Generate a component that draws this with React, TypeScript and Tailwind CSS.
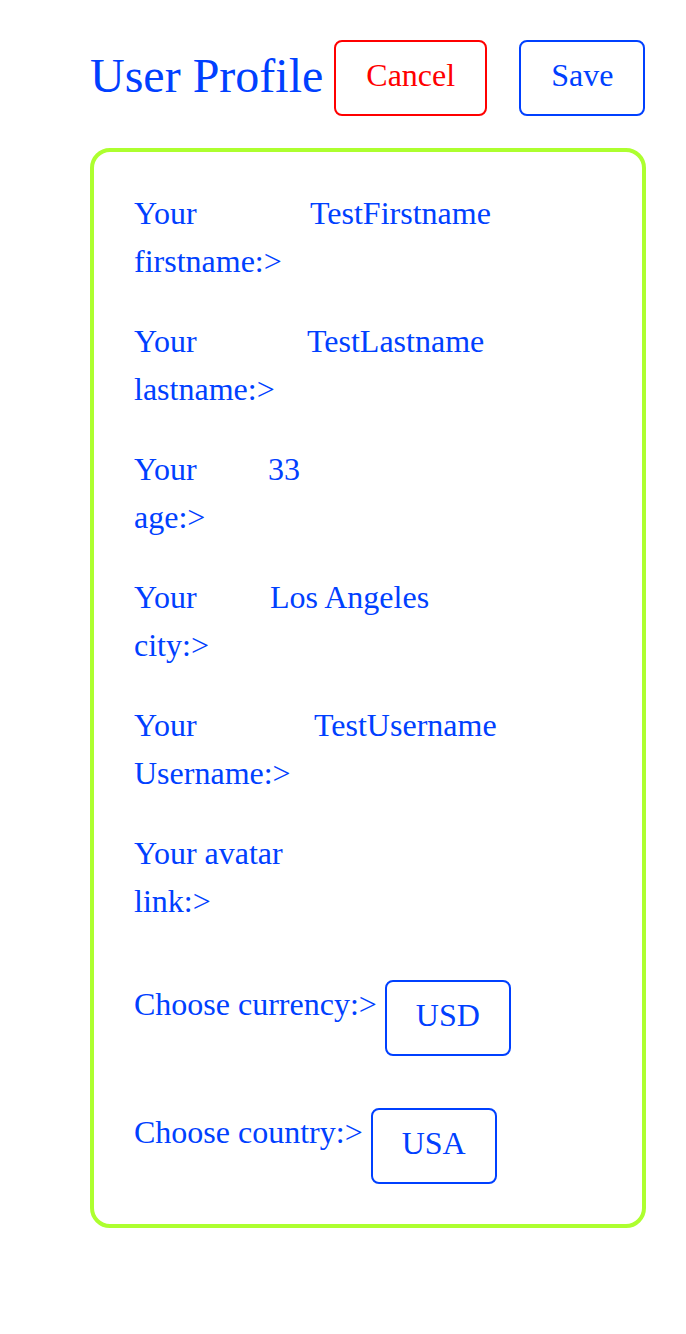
import React from "react";

const rows: { label: string; value: string; w: string }[] = [
  { label: "Your firstname:>", value: "TestFirstname", w: "w-[176px]" },
  { label: "Your lastname:>", value: "TestLastname", w: "w-[173px]" },
  { label: "Your age:>", value: "33", w: "w-[134px]" },
  { label: "Your city:>", value: "Los Angeles", w: "w-[136px]" },
  { label: "Your Username:>", value: "TestUsername", w: "w-[180px]" },
  { label: "Your avatar link:>", value: "", w: "w-[176px]" },
];

function Btn({ children, red, small }: { children: React.ReactNode; red?: boolean; small?: boolean }) {
  const pad = small ? "px-[29px]" : "px-[30px]";
  return (
    <button
      className={
        red
          ? `h-[76px] ${pad} pb-[6px] flex items-center justify-center border-2 border-[#ff0000] rounded-[8px] text-[32px] leading-normal text-[#ff0000] bg-white shrink-0`
          : `h-[76px] ${pad} pb-[6px] flex items-center justify-center border-2 border-[#0040ff] rounded-[8px] text-[32px] leading-normal text-[#0040ff] bg-white shrink-0`
      }
    >
      {children}
    </button>
  );
}

export default function App() {
  return (
    <div
      className="min-h-[1334px] w-[686px] bg-white pt-[40px] text-[#0040ff]"
      style={{ fontFamily: '"Liberation Serif", "Times New Roman", serif' }}
    >
      <div className="ml-[90px] w-[556px]">
        <div className="flex items-center">
          <h1 className="text-[48px] leading-normal font-normal mb-[4px] whitespace-nowrap">User Profile</h1>
          <div className="ml-[11px]">
            <Btn red>Cancel</Btn>
          </div>
          <div className="ml-[32px]">
            <Btn>Save</Btn>
          </div>
        </div>

        <div className="mt-[32px] border-[4px] border-[#adff2f] rounded-[20px] pt-[37px] pb-[40px] px-[40px] flex flex-col">
          {rows.map((r, i) => (
            <div key={i} className={i === rows.length - 1 ? "flex items-start mb-[55px]" : "flex items-start mb-[32px]"}>
              <div className={`${r.w} shrink-0 text-[32px] leading-[48px]`}>{r.label}</div>
              <div className="text-[32px] leading-[48px] whitespace-nowrap">{r.value}</div>
            </div>
          ))}
          <div className="flex items-start gap-2 mb-[52px]">
            <div className="text-[32px] leading-[48px] whitespace-nowrap">Choose currency:&gt;</div>
            <Btn small>USD</Btn>
          </div>
          <div className="flex items-start gap-2">
            <div className="text-[32px] leading-[48px] whitespace-nowrap">Choose country:&gt;</div>
            <Btn small>USA</Btn>
          </div>
        </div>
      </div>
    </div>
  );
}
